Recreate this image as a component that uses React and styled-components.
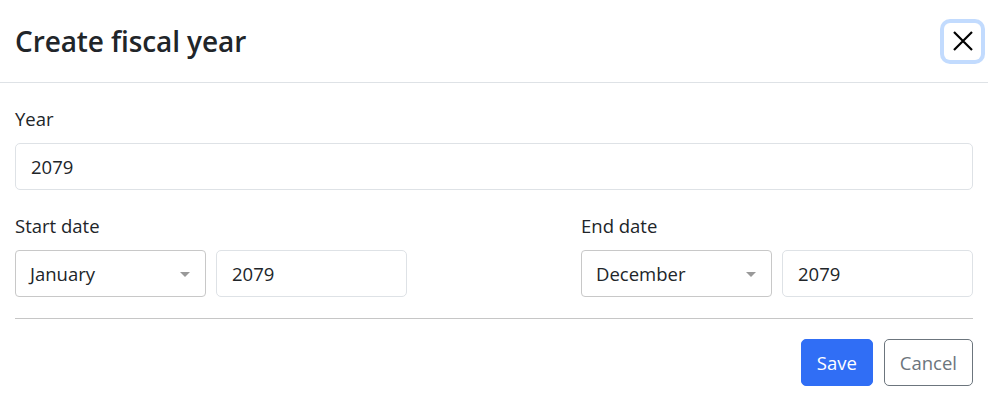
import React from "react";
import styled, { createGlobalStyle } from "styled-components";

const GlobalStyle = createGlobalStyle`
  body {
    margin: 0;
    background: #fff;
    font-family: "Open Sans", "Noto Sans", sans-serif;
    color: #212529;
  }
  * { box-sizing: border-box; }
`;

const Modal = styled.div`
  width: 988px;
  background: #fff;
`;

const Header = styled.div`
  display: flex;
  align-items: center;
  justify-content: space-between;
  height: 83px;
  padding: 0 7px 0 15px;
  border-bottom: 1px solid #dee2e6;
`;

const Title = styled.h5`
  margin: 0;
  font-size: 28px;
  font-weight: 600;
  letter-spacing: -0.1px;
  color: #212529;
`;

const CloseButton = styled.button`
  width: 37px;
  height: 37px;
  display: flex;
  align-items: center;
  justify-content: center;
  padding: 0;
  background: #fff;
  border: none;
  border-radius: 6px;
  box-shadow: 0 0 0 4px rgba(13, 110, 253, 0.25);
  cursor: pointer;
`;

const Body = styled.div`
  padding: 23px 15px 0;
`;

const Field = styled.div`
  margin-bottom: 23px;
`;

const Label = styled.label`
  display: block;
  font-size: 18.5px;
  line-height: 26px;
  margin-bottom: 11px;
`;

const Input = styled.input`
  display: block;
  width: 100%;
  height: 47px;
  padding: 0 15px;
  font-family: inherit;
  font-size: 18.5px;
  color: #212529;
  background: #fff;
  border: 1px solid #dee2e6;
  border-radius: 5px;
  outline: none;
`;

const DateRow = styled.div`
  display: grid;
  grid-template-columns: 392px 392px;
  justify-content: space-between;
`;

const DatePair = styled.div`
  display: grid;
  grid-template-columns: 191px 191px;
  justify-content: space-between;
`;

const SelectBox = styled.div`
  position: relative;
  height: 47px;
  display: flex;
  align-items: center;
  padding: 0 14px;
  font-size: 18.5px;
  border: 1px solid #c8c8c8;
  border-radius: 4px;
  background: #fff;
`;

const Caret = styled.span`
  position: absolute;
  right: 15px;
  top: 50%;
  margin-top: -2px;
  width: 0;
  height: 0;
  border-left: 5.5px solid transparent;
  border-right: 5.5px solid transparent;
  border-top: 5.5px solid #999;
`;

const Divider = styled.hr`
  margin: 21px 0 0;
  border: none;
  border-top: 1px solid #c6c6c6;
`;

const Footer = styled.div`
  display: flex;
  justify-content: flex-end;
  gap: 11px;
  padding: 20px 15px 0;
`;

const Button = styled.button`
  height: 47px;
  padding: 0 15px;
  font-family: inherit;
  font-size: 18.5px;
  border-radius: 5px;
  cursor: pointer;
  color: ${(p) => (p.$variant === "primary" ? "#fff" : "#6c757d")};
  background: ${(p) => (p.$variant === "primary" ? "#306ef5" : "#fff")};
  border: 1px solid ${(p) => (p.$variant === "primary" ? "#306ef5" : "#6c757d")};
`;

const MonthSelect = ({ value }) => (
  <SelectBox>
    {value}
    <Caret />
  </SelectBox>
);

const DateField = ({ label, month, year }) => (
  <div>
    <Label>{label}</Label>
    <DatePair>
      <MonthSelect value={month} />
      <Input defaultValue={year} />
    </DatePair>
  </div>
);

export default function App() {
  return (
    <>
      <GlobalStyle />
      <Modal>
        <Header>
          <Title>Create fiscal year</Title>
          <CloseButton aria-label="Close">
            <svg width="22" height="22" viewBox="0 0 22 22">
              <path d="M2 2 L20 20 M20 2 L2 20" stroke="#000" strokeWidth="2.2" />
            </svg>
          </CloseButton>
        </Header>
        <Body>
          <Field>
            <Label>Year</Label>
            <Input defaultValue="2079" />
          </Field>
          <DateRow>
            <DateField label="Start date" month="January" year="2079" />
            <DateField label="End date" month="December" year="2079" />
          </DateRow>
          <Divider />
        </Body>
        <Footer>
          <Button $variant="primary">Save</Button>
          <Button>Cancel</Button>
        </Footer>
      </Modal>
    </>
  );
}
